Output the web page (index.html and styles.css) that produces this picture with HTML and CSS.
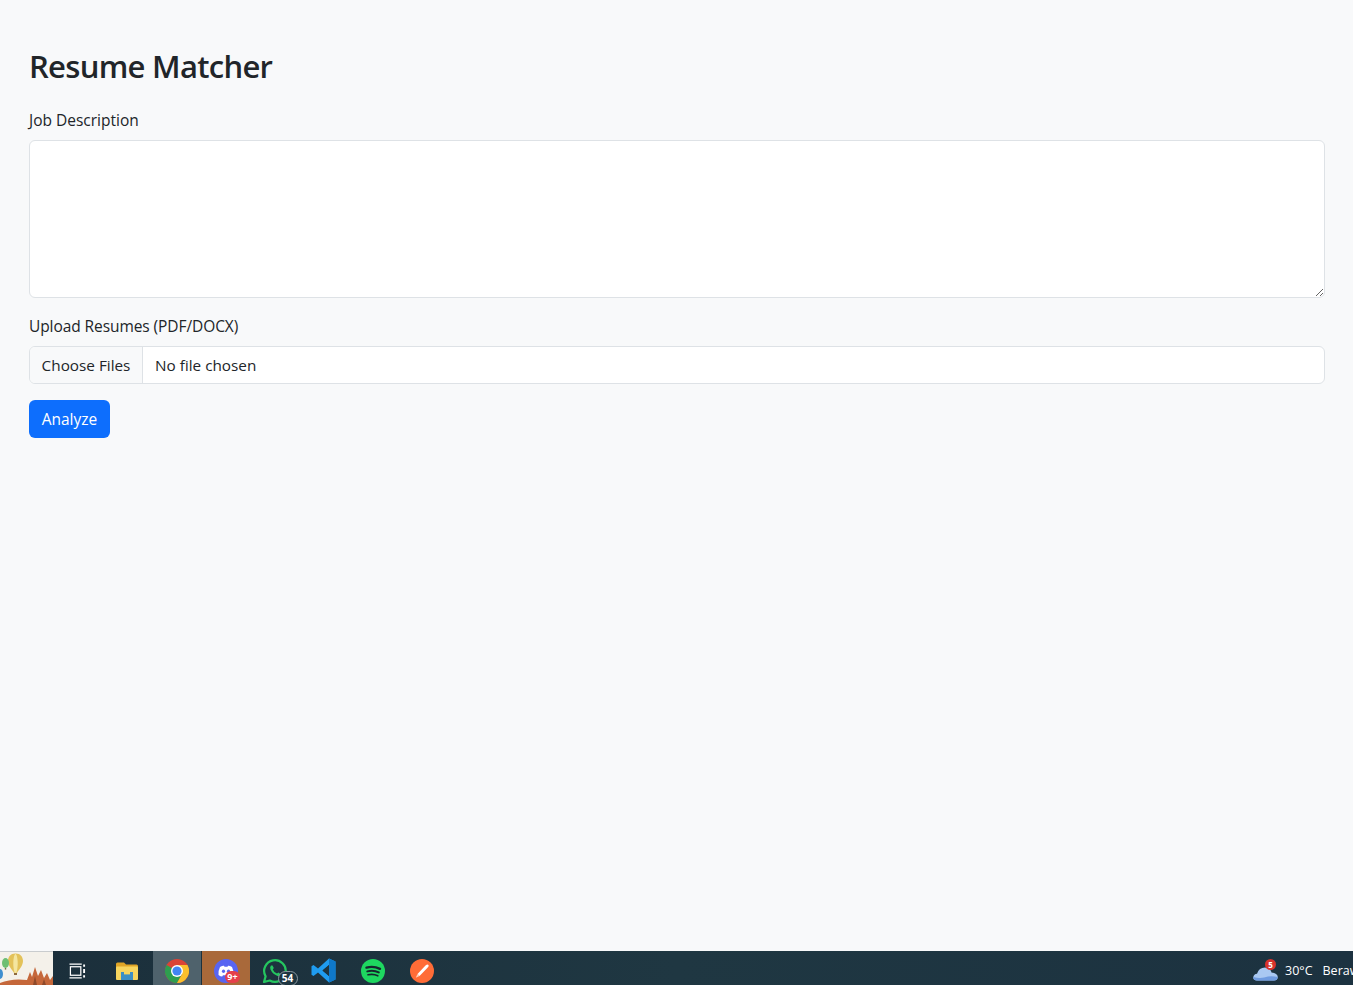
FILE: index.html
```html
<!DOCTYPE html>
<html lang="en">
<head>
  <meta charset="UTF-8">
  <meta name="viewport" content="width=device-width, initial-scale=1.0">
  <title>Resume Matcher</title>
  <link rel="stylesheet" href="styles.css">
</head>
<body>
  <div class="container">
    <h1 class="heading">Resume Matcher</h1>

    <div class="field">
      <label for="job" class="form-label">Job Description</label>
      <textarea id="job" class="form-control job-text"></textarea>
    </div>

    <div class="field">
      <label for="resumes" class="form-label label-tight">Upload Resumes (PDF/DOCX)</label>
      <input type="file" id="resumes" class="form-control file-input" multiple />
    </div>

    <button class="button">Analyze</button>
  </div>

  <div class="taskbar">
    <div class="start">
      <svg width="53" height="33" viewBox="0 0 53 33">
        <path d="M0 33 V31 Q12 26 27 28 L30 20 L32 25 L35 15 L38 24 L41 18 L44 26 L47 21 L50 28 L53 24 V33 Z" fill="#c5673a"/>
        <path d="M33 33 L35 24 L37 33 Z M42 33 L44 27 L46 33 Z" fill="#8f4a2a"/>
        <path d="M15.5 1.5 C10.5 1.5 8 5 8 9 C8 14 12.5 18 14 21 H17 C18.5 18 23 14 23 9 C23 5 20.5 1.5 15.5 1.5 Z" fill="#e3c25a"/>
        <path d="M15.5 1.5 C13 4 12.5 14 14.6 21 H16.4 C18.5 14 18 4 15.5 1.5 Z" fill="#f4e6a0"/>
        <rect x="14" y="21" width="3" height="2" fill="#8d6a3e"/>
        <ellipse cx="5.5" cy="11" rx="3.5" ry="5" fill="#6fbf73"/>
        <rect x="4.8" y="16" width="1.4" height="1.6" fill="#7a6a4a"/>
        <ellipse cx="0" cy="22" rx="3" ry="5" fill="#3f8fcf"/>
      </svg>
    </div>

    <div class="tile tile-first">
      <svg width="17" height="16" viewBox="0 0 18 16" fill="none" stroke="#fff" stroke-width="1.3">
        <rect x="1.5" y="3.5" width="11" height="9"/>
        <path d="M0.5 0.7 H13.5 M0.5 15.3 H13.5"/>
        <path d="M16 1 V3.5 M16 6 V10 M16 12.5 V15" stroke-width="2"/>
      </svg>
    </div>

    <div class="tile">
      <svg width="22" height="18" viewBox="0 0 22 18">
        <path d="M0 2 Q0 0.5 1.5 0.5 H8 L10 2.5 H20.5 Q22 2.5 22 4 V6 H0 Z" fill="#e0a526"/>
        <rect x="0" y="4.5" width="22" height="13.5" rx="1" fill="#f7d55e"/>
        <path d="M5 10 H17 V18 H5 Z" fill="#3d8fc4"/>
        <rect x="8" y="10" width="6" height="2.4" fill="#f7d55e"/>
      </svg>
    </div>

    <div class="tile tile-active">
      <svg width="24" height="24" viewBox="0 0 24 24">
        <circle cx="12" cy="12" r="12" fill="#db4437"/>
        <path d="M12 12 L1.6 6 A12 12 0 0 0 12 24 L18 13.5 Z" fill="#2e9e4f"/>
        <path d="M12 6 H22.4 A12 12 0 0 1 12 24 L17.2 15 Z" fill="#fbc02d"/>
        <circle cx="12" cy="12" r="6" fill="#fff"/>
        <circle cx="12" cy="12" r="4.6" fill="#4285f4"/>
      </svg>
    </div>

    <div class="tile tile-open">
      <div class="icon-wrap">
        <svg width="24" height="24" viewBox="0 0 24 24">
          <circle cx="12" cy="12" r="12" fill="#5865f2"/>
          <path d="M6 8 Q9 6.3 10 6.8 L10.5 7.8 H13.5 L14 6.8 Q15 6.3 18 8 Q20 12 19.5 16 Q17.5 17.6 15.8 17.6 L15 16.2 H9 L8.2 17.6 Q6.5 17.6 4.5 16 Q4 12 6 8 Z" fill="#fff"/>
          <ellipse cx="9.5" cy="12.3" rx="1.6" ry="1.8" fill="#5865f2"/>
          <ellipse cx="14.5" cy="12.3" rx="1.6" ry="1.8" fill="#5865f2"/>
        </svg>
        <span class="badge-red">9+</span>
      </div>
    </div>

    <div class="tile">
      <div class="icon-wrap">
        <svg width="26" height="26" viewBox="0 0 26 26" fill="none">
          <path d="M2 24 L3.6 18.4 A10.8 10.8 0 1 1 7.8 22.5 Z" stroke="#25c65f" stroke-width="2.2" stroke-linejoin="round"/>
          <path d="M9 7.5 Q7.5 9 8.5 11.5 Q10.5 16 15.5 18 Q18 18.6 19 16.5 L16.5 14.5 L15 15.5 Q12 14.5 10.8 11.5 L11.8 10 L10.5 7.5 Z" fill="#25c65f"/>
        </svg>
        <span class="badge-count">54</span>
      </div>
    </div>

    <div class="tile">
      <svg width="25" height="25" viewBox="0 0 25 25">
        <path d="M18 0.5 L24.5 3.5 V21.5 L18 24.5 L7 14.5 L2.5 18 L0.5 16.8 V8.2 L2.5 7 L7 10.5 Z M18 7 L11.5 12.5 L18 18 Z" fill="#1f9cf0" fill-rule="evenodd"/>
        <path d="M18 0.5 L24.5 3.5 V21.5 L18 24.5 Z" fill="#0f78c9"/>
        <path d="M18 7 L18 18 L11.5 12.5 Z" fill="#1e3540"/>
      </svg>
    </div>

    <div class="tile">
      <svg width="24" height="24" viewBox="0 0 24 24" fill="none" stroke="#16262e" stroke-linecap="round">
        <circle cx="12" cy="12" r="12" fill="#1ed760" stroke="none"/>
        <path d="M5.5 8.6 Q12.5 6.6 19 9.8" stroke-width="2.4"/>
        <path d="M6.3 12.4 Q12.5 10.8 17.8 13.4" stroke-width="2"/>
        <path d="M7 15.8 Q12.5 14.6 16.8 16.8" stroke-width="1.6"/>
      </svg>
    </div>

    <div class="tile">
      <svg width="24" height="24" viewBox="0 0 24 24">
        <circle cx="12" cy="12" r="12" fill="#ff6c37"/>
        <path d="M7.5 15 L15.5 6.5 Q17.5 5 18.5 6 Q19.3 7.3 17.5 8.8 L9.5 17 Z" fill="#fff"/>
        <path d="M5.8 18.7 L7.5 15 L9.5 17 Z" fill="#ffd0bc"/>
      </svg>
    </div>

    <div class="weather">
      <div class="icon-wrap">
        <svg width="25" height="20" viewBox="0 0 25 20">
          <path d="M4 19.5 Q0 19.5 0.3 16 Q0.8 13 4 12.8 Q6 6.5 12 6.5 Q17.5 7 18.5 11.5 Q24.5 12 24.8 16 Q24.5 19.5 21 19.5 Z" fill="#a9c8f2"/>
          <path d="M4 19.5 Q0 19.5 0.3 16 Q8 18 15 15.5 Q20 15 24.8 16 Q24.5 19.5 21 19.5 Z" fill="#6f9be0"/>
        </svg>
        <span class="badge-weather">5</span>
      </div>
      <span class="temp">30°C</span>
      <span class="sky">Berawan</span>
    </div>
  </div>
</body>
</html>
```

FILE: styles.css
```css
* {
  box-sizing: border-box;
}

body {
  margin: 0;
  padding: 0;
  height: 100vh;
  display: flex;
  flex-direction: column;
  overflow: hidden;
  font-family: "Open Sans", "Noto Sans", Arial, sans-serif;
  font-size: 15.5px;
  color: #212529;
  background-color: #f8f9fa;
}

.container {
  flex: 1;
  padding: 47px 28px 0 29px;
}

.heading {
  margin: 0 0 23px;
  font-size: 31px;
  line-height: 38px;
  font-weight: 600;
  letter-spacing: -0.7px;
}

.field {
  margin-bottom: 16px;
}

.form-label {
  display: block;
  margin-bottom: 8px;
  line-height: 24px;
}

.label-tight {
  letter-spacing: -0.08px;
}

.form-control {
  display: block;
  width: 100%;
  border: 1px solid #dee2e6;
  border-radius: 6px;
  background-color: #fff;
  font: inherit;
  color: #212529;
}

.job-text {
  height: 158px;
  padding: 6px 12px;
}

.file-input {
  height: 38px;
  padding: 6px 12px;
  font-size: 15.3px;
  line-height: 24px;
  overflow: hidden;
}

.file-input::file-selector-button {
  width: 113px;
  margin: -6px 12px -6px -12px;
  padding: 6px 0;
  height: 36px;
  border: 0;
  border-right: 1px solid #dee2e6;
  border-radius: 0;
  background-color: #f8f9fa;
  font: inherit;
  color: #212529;
}

.button {
  display: block;
  height: 38px;
  width: 81px;
  padding: 0;
  background-color: #0d6efd;
  color: white;
  border: none;
  border-radius: 6px;
  font: inherit;
  cursor: pointer;
}

.taskbar {
  display: flex;
  flex: none;
  align-items: center;
  height: 34px;
  background: linear-gradient(90deg, #1b2f3b, #1f3742 50%, #1c3240);
  color: #fff;
}

.start {
  flex: none;
  width: 53px;
  height: 34px;
  border-top: 1px solid #c9ccce;
  background-color: #f4f1ea;
}

.start svg {
  display: block;
}

.tile {
  flex: none;
  display: flex;
  align-items: center;
  justify-content: center;
  width: 49px;
  height: 34px;
  padding-top: 5px;
}

.tile-first {
  width: 49px;
}

.tile-active {
  width: 48px;
  margin-left: 2px;
  background-color: #4f626c;
}

.tile-open {
  width: 48px;
  margin-left: 1px;
  background-color: #a9693a;
}

.icon-wrap {
  position: relative;
  display: flex;
}

.badge-red {
  position: absolute;
  right: -2px;
  bottom: 0;
  width: 15px;
  height: 12px;
  border-radius: 6px;
  background-color: #e5404a;
  color: #fff;
  font-size: 9px;
  font-weight: 700;
  line-height: 12px;
  text-align: center;
}

.badge-count {
  position: absolute;
  right: -10px;
  bottom: -2px;
  width: 20px;
  height: 15px;
  border: 1px solid #8a979e;
  border-radius: 8px;
  background-color: #1e3540;
  color: #fff;
  font-size: 10px;
  font-weight: 700;
  line-height: 13px;
  text-align: center;
}

.weather {
  display: flex;
  flex: none;
  align-items: center;
  width: 100px;
  height: 34px;
  margin-left: auto;
  padding-top: 5px;
  overflow: hidden;
  white-space: nowrap;
  font-size: 12.5px;
}

.badge-weather {
  position: absolute;
  top: -2px;
  right: 2px;
  width: 11px;
  height: 11px;
  border-radius: 50%;
  background-color: #d8322c;
  color: #fff;
  font-size: 8px;
  font-weight: 700;
  line-height: 11px;
  text-align: center;
}

.temp {
  margin-left: 7px;
}

.sky {
  margin-left: 10px;
}
```
